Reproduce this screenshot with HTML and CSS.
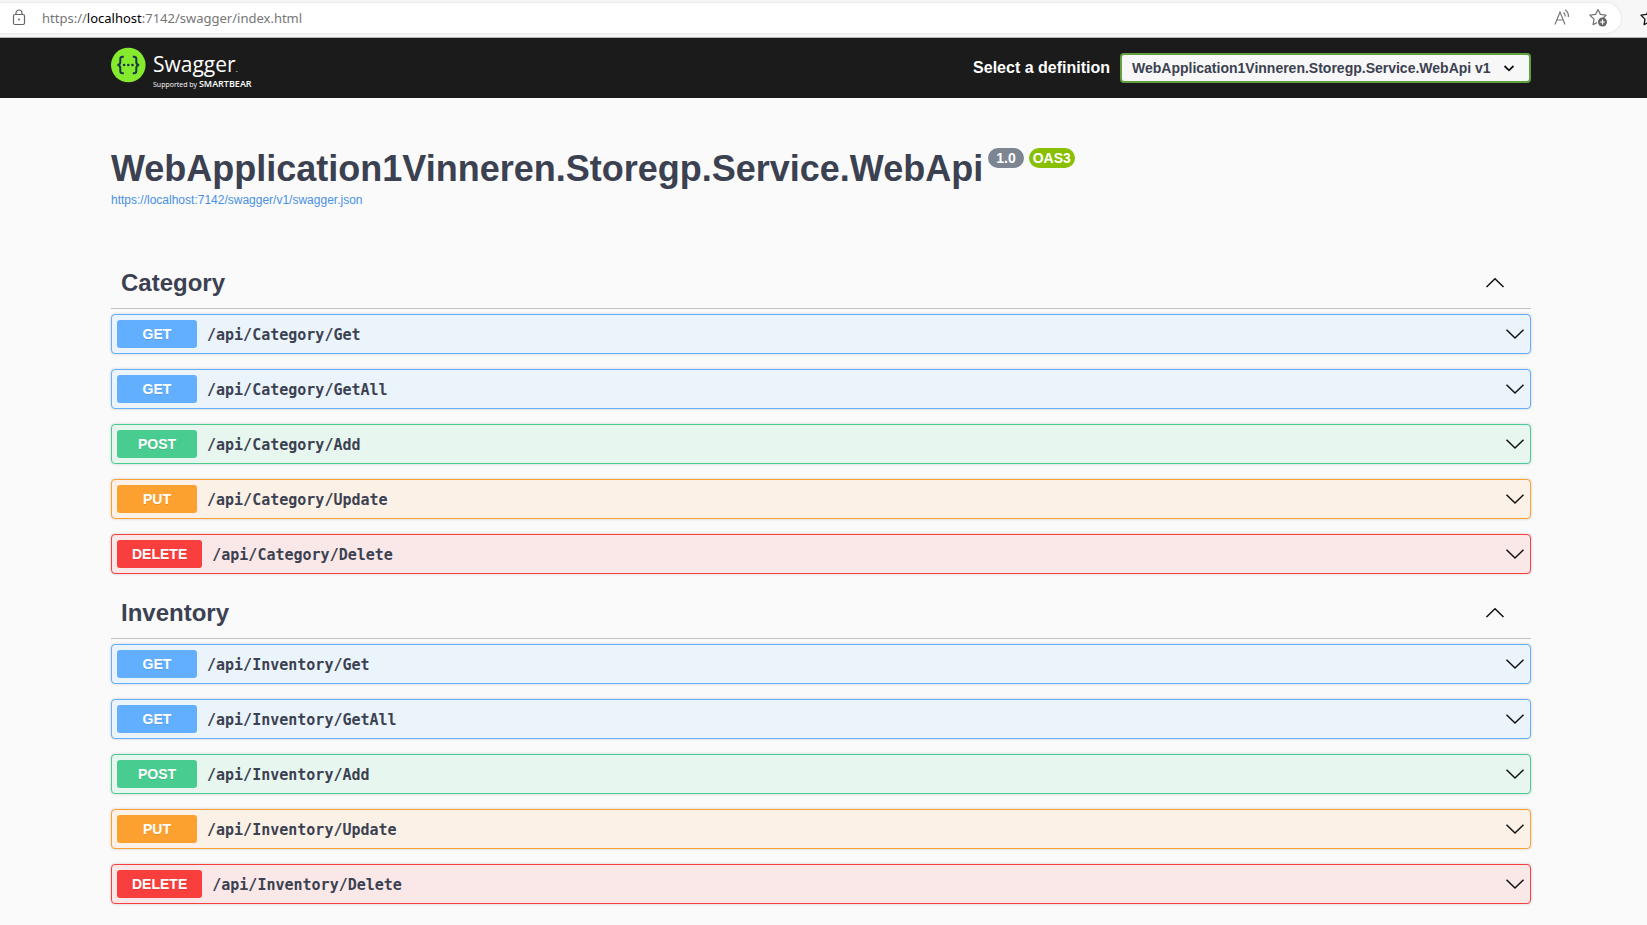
FILE: index.html
```html
<!DOCTYPE html>
<html lang="en">
<head>
<meta charset="utf-8">
<title>Swagger UI</title>
<link rel="stylesheet" href="styles.css">
</head>
<body>
<svg class="sprite" aria-hidden="true">
  <symbol id="down" viewBox="0 0 20 20"><path d="M1.500 5.800L10 14L18.500 5.800" fill="none" stroke="#111" stroke-width="1.500"/></symbol>
  <symbol id="up" viewBox="0 0 20 20"><path d="M1.500 14L10 5.800L18.500 14" fill="none" stroke="#111" stroke-width="1.500"/></symbol>
  <symbol id="star" viewBox="0 0 20 20"><path d="M9 1.500L11.400 6.400L17 7.200L13 11M9 1.500L6.600 6.400L1 7.200L5 11.100L4.100 16.600L8 14.600" fill="none" stroke="currentColor" stroke-width="1.300" stroke-linejoin="round"/></symbol>
</svg>
<div class="browser-bar">
  <div class="address">
    <svg class="lock" viewBox="0 0 14 18" aria-hidden="true"><rect x="1.500" y="5.500" width="11" height="10" rx="1.500" fill="none" stroke="#666" stroke-width="1.200"/><path d="M4 5.500V4a3 3 0 0 1 6 0v1.500" fill="none" stroke="#666" stroke-width="1.200"/><circle cx="7" cy="10.500" r="1" fill="#666"/></svg>
    <div class="url" role="textbox" aria-label="Address">https://<span class="host">localhost</span>:7142/swagger/index.html</div>
    <button class="tool" aria-label="Read aloud"><svg viewBox="0 0 20 20"><path d="M2 16.500L7 4L12 16.500M3.800 12H10.200M10.500 4.500Q12.500 6 12.200 8.500M12 1.800Q16 4.500 15.300 9" fill="none" stroke="#777" stroke-width="1.200"/></svg></button>
    <button class="tool" aria-label="Add to favorites"><svg viewBox="0 0 20 20"><use href="#star"/><circle cx="13.500" cy="14" r="4.500" fill="#666"/><path d="M13.500 11.500v5M11 14h5" stroke="#fff" stroke-width="1.200"/></svg></button>
  </div>
  <button class="favorites" aria-label="Favorites"><svg viewBox="0 0 20 20"><use href="#star"/></svg></button>
</div>
<header class="topbar">
  <div class="wrapper topbar-row">
    <a class="logo" href="#" aria-label="Swagger, supported by SmartBear">
      <svg class="logo-mark" viewBox="0 0 36 36" aria-hidden="true"><circle cx="17.300" cy="18" r="17.300" fill="#85ea2d"/><g fill="none" stroke="#173647" stroke-width="2"><path d="M12.800 9.800h-1.200q-2.300 0-2.300 2.300v2.900q0 2.700-2.800 3 2.800.3 2.800 3v2.900q0 2.300 2.300 2.300h1.200M21.800 9.800h1.200q2.300 0 2.300 2.300v2.900q0 2.700 2.800 3-2.800.3-2.800 3v2.900q0 2.300-2.300 2.300h-1.200"/></g><g fill="#173647"><circle cx="13.100" cy="18" r="1.300"/><circle cx="17.300" cy="18" r="1.300"/><circle cx="21.500" cy="18" r="1.300"/></g></svg>
      <span class="logo-text"><span class="logo-name">Swagger<span class="dot">.</span></span><span class="logo-by">Supported by <b>SMARTBEAR</b></span></span>
    </a>
    <div class="definition">
      <label for="definition">Select a definition</label>
      <span class="select-box">
        <select id="definition"><option>WebApplication1Vinneren.Storegp.Service.WebApi v1</option></select>
        <svg class="select-arrow" viewBox="0 0 20 20" aria-hidden="true"><path d="M5.500 8L10 12.300L14.500 8" fill="none" stroke="#111" stroke-width="1.800"/></svg>
      </span>
    </div>
  </div>
</header>
<main class="wrapper">
  <section class="info">
    <h1>WebApplication1Vinneren.Storegp.Service.WebApi <span class="badges"><span class="badge version">1.0</span><span class="badge oas">OAS3</span></span></h1>
    <a class="spec" href="#">https://localhost:7142/swagger/v1/swagger.json</a>
  </section>
  <section>
    <h2 class="tag">Category<button aria-label="Collapse Category"><svg><use href="#up"/></svg></button></h2>
    <button class="op get"><span class="method">GET</span><span class="path">/api/Category/Get</span><svg><use href="#down"/></svg></button>
    <button class="op get"><span class="method">GET</span><span class="path">/api/Category/GetAll</span><svg><use href="#down"/></svg></button>
    <button class="op post"><span class="method">POST</span><span class="path">/api/Category/Add</span><svg><use href="#down"/></svg></button>
    <button class="op put"><span class="method">PUT</span><span class="path">/api/Category/Update</span><svg><use href="#down"/></svg></button>
    <button class="op delete"><span class="method">DELETE</span><span class="path">/api/Category/Delete</span><svg><use href="#down"/></svg></button>
  </section>
  <section>
    <h2 class="tag">Inventory<button aria-label="Collapse Inventory"><svg><use href="#up"/></svg></button></h2>
    <button class="op get"><span class="method">GET</span><span class="path">/api/Inventory/Get</span><svg><use href="#down"/></svg></button>
    <button class="op get"><span class="method">GET</span><span class="path">/api/Inventory/GetAll</span><svg><use href="#down"/></svg></button>
    <button class="op post"><span class="method">POST</span><span class="path">/api/Inventory/Add</span><svg><use href="#down"/></svg></button>
    <button class="op put"><span class="method">PUT</span><span class="path">/api/Inventory/Update</span><svg><use href="#down"/></svg></button>
    <button class="op delete"><span class="method">DELETE</span><span class="path">/api/Inventory/Delete</span><svg><use href="#down"/></svg></button>
  </section>
</main>
</body>
</html>
```
FILE: styles.css
```css
* { box-sizing: border-box; }
body { margin: 0; background: #fafafa; color: #3b4151; font-family: "Liberation Sans", Arial, sans-serif; overflow-x: hidden; }
button { border: 0; padding: 0; background: none; color: inherit; font: inherit; cursor: pointer; }
svg { display: block; flex: none; }
.sprite { display: none; }

.browser-bar { display: flex; align-items: center; height: 38px; padding-bottom: 1px; background: #f7f7f7; border-bottom: 1px solid #b4b4b4; overflow: hidden; }
.address { flex: 1; display: flex; align-items: center; height: 30px; padding: 0 12px; border-radius: 0 15px 15px 0; background: #fff; box-shadow: 0 0 3px rgba(0, 0, 0, .12); }
.lock { width: 14px; height: 18px; }
.url { flex: 1; margin-left: 16px; color: #767676; font: 13px/20px "Noto Sans", sans-serif; }
.host { color: #000; }
.tool { margin-left: 16px; color: #777; }
.tool svg, .favorites svg { width: 20px; height: 20px; }
.favorites { width: 26px; padding-left: 19px; color: #111; }

.wrapper { max-width: 1465px; margin: 0 auto; padding: 0 25px 0 20px; }
.topbar { background: #1b1b1b; }
.topbar-row { display: flex; align-items: center; justify-content: space-between; height: 60px; }
.logo { display: flex; gap: 6px; color: #fff; text-decoration: none; font-family: "Open Sans", sans-serif; }
.logo-mark { width: 36px; height: 36px; }
.logo-text { display: flex; flex-direction: column; padding-top: 3px; }
.logo-name { display: flex; align-items: baseline; font-size: 21px; line-height: 29px; }
.dot { font-size: 8px; line-height: 8px; }
.logo-by { font-size: 7px; line-height: 10px; }
.logo-by b { font-size: 9px; line-height: 9px; font-weight: 600; }
.definition { display: flex; align-items: center; gap: 10px; }
.definition label { color: #fff; font-size: 16px; font-weight: 700; }
.select-box { position: relative; }
.select-box select { display: block; height: 30px; padding: 0 38px 0 10px; border: 2px solid #62a03f; border-radius: 4px; appearance: none; background: #f7f7f7; color: #3b4151; font: bold 14px "Liberation Sans", Arial, sans-serif; }
.select-arrow { position: absolute; top: 5px; right: 12px; width: 20px; height: 20px; pointer-events: none; }

.info { padding: 50px 0 52px; }
.info h1 { display: flex; gap: 5px; margin: 0 0 4px; font-size: 36px; line-height: 41px; }
.badges { display: flex; gap: 5px; align-items: flex-start; }
.badge { padding: 2px 8px; border-radius: 20px; background: #7d8492; color: #fff; font-size: 14px; line-height: 16px; }
.oas { padding: 2px 4px; background: #89bf04; }
.spec { display: block; color: #4990e2; font-size: 12px; line-height: 14px; text-decoration: none; }

.tag { display: flex; align-items: center; justify-content: space-between; height: 50px; margin: 0 0 5px; padding: 0 26px 2px 10px; border-bottom: 1px solid rgba(59, 65, 81, .3); font-size: 24px; }
.tag svg, .op svg { width: 20px; height: 20px; }
.op { display: flex; align-items: center; width: 100%; margin-bottom: 15px; padding: 5px; border: 1px solid var(--c); border-radius: 4px; background: var(--bg); box-shadow: 0 0 3px rgba(0, 0, 0, .19); text-align: left; }
.method { min-width: 80px; padding: 6px 15px; border-radius: 3px; background: var(--c); color: #fff; font-size: 14px; line-height: 16px; font-weight: 700; text-align: center; text-shadow: 0 1px 0 rgba(0, 0, 0, .1); }
.path { flex: 1; padding: 1px 10px 0; font: bold 15px/18px "DejaVu Sans Mono", monospace; }
.get { --c: #61affe; --bg: #ebf3fb; }
.post { --c: #49cc90; --bg: #e8f6f0; }
.put { --c: #fca130; --bg: #fbf1e6; }
.delete { --c: #f93e3e; --bg: #fae7e7; }
```
